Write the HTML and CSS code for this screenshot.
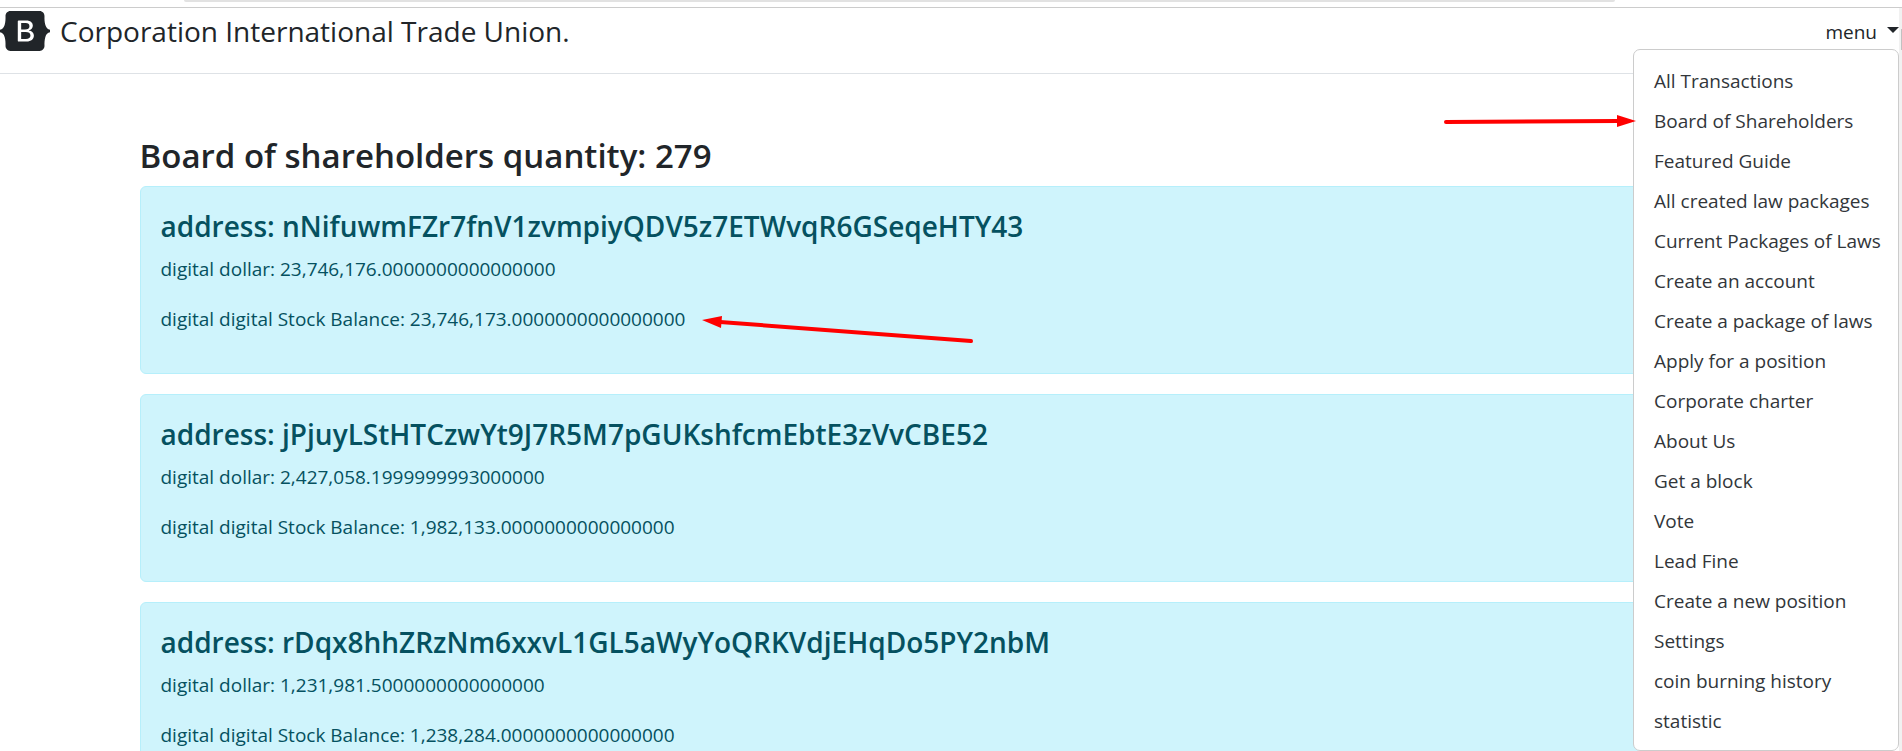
FILE: index.html
```html
<!DOCTYPE html>
<html lang="en">
<head>
<meta charset="utf-8">
<title>Corporation International Trade Union</title>
<link rel="stylesheet" href="styles.css">
</head>
<body>
<div class="chrome"><div class="address-bar"></div></div>
<div class="viewport">
  <div class="page">
    <header class="header">
      <a class="brand" href="#">
        <svg class="brand-logo" viewBox="0 0 118 94" role="img" aria-label="Bootstrap"><path fill-rule="evenodd" clip-rule="evenodd" fill="currentColor" d="M24.509 0c-6.733 0-11.715 5.893-11.492 12.284.214 6.14-.064 14.092-2.066 20.577C8.943 39.365 5.547 43.485 0 44.014v5.972c5.547.529 8.943 4.649 10.951 11.153 2.002 6.485 2.28 14.437 2.066 20.577C12.794 88.106 17.776 94 24.51 94H93.5c6.733 0 11.714-5.893 11.491-12.284-.214-6.14.064-14.092 2.066-20.577 2.009-6.504 5.396-10.624 10.943-11.153v-5.972c-5.547-.529-8.934-4.649-10.943-11.153-2.002-6.484-2.28-14.437-2.066-20.577C105.214 5.894 100.233 0 93.5 0H24.508zM80 57.863C80 66.663 73.436 72 62.543 72H44a2 2 0 01-2-2V24a2 2 0 012-2h18.437c9.083 0 15.044 4.92 15.044 12.474 0 5.302-4.01 10.049-9.119 10.88v.277C75.317 46.394 80 51.21 80 57.863zM60.521 28.34H49.948v14.934h8.905c6.884 0 10.68-2.772 10.68-7.727 0-4.643-3.264-7.207-9.012-7.207zM49.948 49.2v16.458H60.91c7.167 0 10.964-2.876 10.964-8.281 0-5.406-3.903-8.178-11.425-8.178H49.948z"/></svg>
        <span>Corporation International Trade Union.</span>
      </a>
      <nav class="dropdown">
        <button class="dropdown-toggle" type="button" aria-expanded="true">menu</button>
        <ul class="dropdown-menu">
          <li><a href="#">All Transactions</a></li>
          <li><a href="#">Board of Shareholders</a></li>
          <li><a href="#">Featured Guide</a></li>
          <li><a href="#">All created law packages</a></li>
          <li><a href="#">Current Packages of Laws</a></li>
          <li><a href="#">Create an account</a></li>
          <li><a href="#">Create a package of laws</a></li>
          <li><a href="#">Apply for a position</a></li>
          <li><a href="#">Corporate charter</a></li>
          <li><a href="#">About Us</a></li>
          <li><a href="#">Get a block</a></li>
          <li><a href="#">Vote</a></li>
          <li><a href="#">Lead Fine</a></li>
          <li><a href="#">Create a new position</a></li>
          <li><a href="#">Settings</a></li>
          <li><a href="#">coin burning history</a></li>
          <li><a href="#">statistic</a></li>
        </ul>
        <svg class="arrow arrow-menu" viewBox="0 0 194 14" aria-hidden="true"><path class="shaft" d="M3 8L176 7"/><path class="head" d="M174 1L193 7L174 13Z"/></svg>
      </nav>
    </header>
    <main class="container">
      <h1 class="title">Board of shareholders quantity: 279</h1>
      <section class="card">
        <h2>address: nNifuwmFZr7fnV1zvmpiyQDV5z7ETWvqR6GSeqeHTY43</h2>
        <p>digital dollar: 23,746,176.0000000000000000</p>
        <p>digital digital Stock Balance: 23,746,173.0000000000000000</p>
        <svg class="arrow arrow-balance" viewBox="0 0 272 30" aria-hidden="true"><path class="shaft" d="M18 7L269 26"/><path class="head" d="M0 5L20 1L19 13Z"/></svg>
      </section>
      <section class="card">
        <h2>address: jPjuyLStHTCzwYt9J7R5M7pGUKshfcmEbtE3zVvCBE52</h2>
        <p>digital dollar: 2,427,058.1999999993000000</p>
        <p>digital digital Stock Balance: 1,982,133.0000000000000000</p>
      </section>
      <section class="card">
        <h2>address: rDqx8hhZRzNm6xxvL1GL5aWyYoQRKVdjEHqDo5PY2nbM</h2>
        <p>digital dollar: 1,231,981.5000000000000000</p>
        <p>digital digital Stock Balance: 1,238,284.0000000000000000</p>
      </section>
    </main>
  </div>
  <div class="scrollbar"><div class="thumb"></div></div>
</div>
</body>
</html>
```

FILE: styles.css
```css
* { box-sizing: border-box; }

body {
  margin: 0;
  height: 100vh;
  overflow: hidden;
  display: flex;
  flex-direction: column;
  background: #fff;
  color: #212529;
  font-family: "Segoe UI", "Open Sans", "Noto Sans", sans-serif;
  font-size: 19px;
  line-height: 30px;
}

.chrome {
  flex: none;
  height: 8px;
  padding: 0 287px 0 184px;
  border-bottom: 1px solid #ccc;
}

.address-bar {
  height: 2px;
  background: #e2e2e2;
  border-radius: 0 0 6px 6px;
}

.viewport {
  flex: 1;
  min-height: 0;
  display: flex;
}

.page {
  flex: 1;
  min-width: 0;
  overflow: hidden;
}

.scrollbar {
  flex: none;
  width: 3px;
  padding: 21px 0 0 2px;
  background: #f1f1f1;
}

.thumb { height: 21px; background: #c1c1c1; }

.header {
  display: flex;
  justify-content: space-between;
  align-items: flex-start;
  height: 66px;
  padding-top: 3px;
  border-bottom: 1px solid #dee2e6;
}

.brand {
  display: flex;
  align-items: center;
  gap: 10px;
  color: inherit;
  text-decoration: none;
  font-size: 28px;
  line-height: 40px;
}

.brand-logo { width: 50px; height: 40px; }

.dropdown { position: relative; }

.dropdown-toggle {
  display: flex;
  align-items: center;
  gap: 10px;
  margin: 0;
  padding: 6px 0 0;
  border: 0;
  background: none;
  color: inherit;
  font: inherit;
}

.dropdown-toggle::after {
  content: "";
  margin-bottom: 4px;
  border-top: 6px solid;
  border-left: 6px solid transparent;
  border-right: 6px solid transparent;
}

.dropdown-menu {
  position: absolute;
  z-index: 2;
  top: 38px;
  right: 0;
  width: 266px;
  margin: 0;
  padding: 11px 0 9px;
  list-style: none;
  background: #fff;
  border: 1px solid #ccc;
  border-radius: 7px;
}

.dropdown-menu a {
  display: block;
  padding: 5px 20px;
  color: #32363a;
  text-decoration: none;
  white-space: nowrap;
}

.container {
  max-width: 1650px;
  margin: 0 auto;
  padding: 61px 15px 0;
}

.title {
  margin: 0 0 9px;
  font-size: 33px;
  line-height: 42px;
  font-weight: 600;
}

.card {
  position: relative;
  margin-bottom: 20px;
  padding: 21px 20px 19px;
  border: 1px solid #b6effb;
  border-radius: 6px;
  background: #cff4fc;
  color: #055160;
}

.card h2 {
  margin: 0 0 10px;
  font-size: 28px;
  line-height: 36px;
  font-weight: 600;
}

.card p { margin: 0 0 20px; }

.arrow { position: absolute; z-index: 3; }
.arrow-menu { top: 103px; right: 262px; width: 194px; height: 14px; }
.arrow-balance { top: 128px; left: 561px; width: 272px; height: 30px; }
.shaft { fill: none; stroke: #f00; stroke-width: 4; stroke-linecap: round; }
.head { fill: #f00; }
```
